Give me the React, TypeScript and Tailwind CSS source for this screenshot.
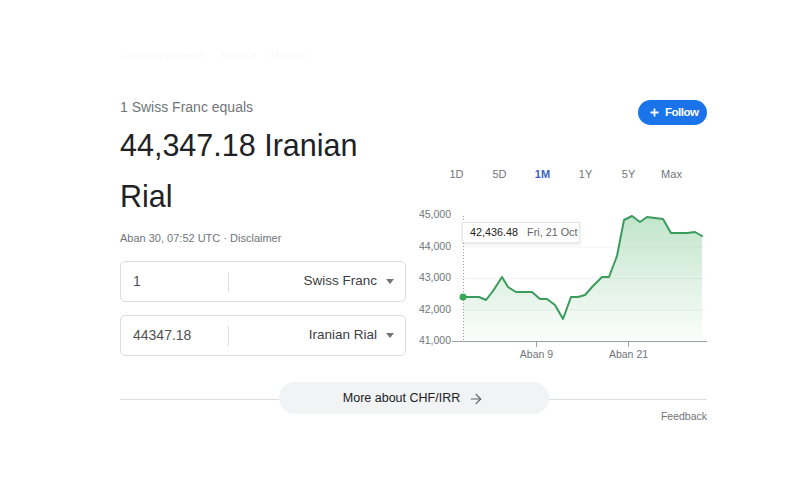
import React from "react";
import { ArrowRight } from "lucide-react";

const pts: [number, number][] = [
  [463, 297], [479, 297], [486, 300], [493, 291], [502, 277], [508, 287],
  [516, 292], [532, 292], [540, 299], [547, 299], [555, 305], [563, 319],
  [571, 297], [578, 297], [585, 295], [593, 286], [602, 277], [609, 277],
  [617, 256], [624, 220], [632, 216], [640, 222], [647, 217], [663, 219],
  [671, 233], [687, 233], [695, 232], [702, 236],
];

const linePath = pts.map((p, i) => `${i === 0 ? "M" : "L"}${p[0]},${p[1]}`).join(" ");
const fillPath = `${linePath} L702,341.5 L463,341.5 Z`;

function Converter({ amount, currency, mt }: { amount: string; currency: string; mt: string }) {
  return (
    <div className={`${mt} h-[41px] border border-[#dadce0] rounded-[5px] flex items-center`}>
      <div className="w-[107px] pl-[12px] text-[14px] text-[#4d5156]">{amount}</div>
      <div className="w-px h-[20px] bg-[#dadce0]" />
      <div className="flex-1 flex justify-end items-center pr-[11px]">
        <span className="text-[13.5px] text-[#3c4043]">{currency}</span>
        <span className="ml-[9px] w-0 h-0 border-l-[4px] border-r-[4px] border-t-[5px] border-l-transparent border-r-transparent border-t-[#70757a]" />
      </div>
    </div>
  );
}

export default function App() {
  const tabs = ["1D", "5D", "1M", "1Y", "5Y", "Max"];
  const yLabels: [string, number][] = [
    ["45,000", 215.5],
    ["44,000", 247],
    ["43,000", 278.5],
    ["42,000", 310],
    ["41,000", 341.5],
  ];
  return (
    <div
      className="w-[800px] h-[500px] bg-white overflow-hidden"
      style={{ fontFamily: '"Liberation Sans", Arial, sans-serif' }}
    >
      <div className="pt-[48px] pl-[122px] h-[64px] text-[10px] leading-[16px] text-[#f9f9f9] flex gap-[14px]">
        <span>Currency converter</span>
        <span>Finance</span>
        <span>Markets</span>
      </div>

      <div className="ml-[120px] w-[587px] mt-[33px] flex">
        {/* left */}
        <div className="w-[286px]">
          <div className="text-[14px] leading-[20px] text-[#70757a]">1 Swiss Franc equals</div>
          <div className="mt-[3px] text-[30.5px] leading-[51px] text-[#202124]">
            44,347.18 Iranian
            <br />
            Rial
          </div>
          <div className="mt-[8px] text-[11px] leading-[16px] text-[#70757a]">
            Aban 30, 07:52 UTC · Disclaimer
          </div>
          <Converter amount="1" currency="Swiss Franc" mt="mt-[15px]" />
          <Converter amount="44347.18" currency="Iranian Rial" mt="mt-[13px]" />
        </div>

        {/* right */}
        <div className="flex-1">
          <div className="mt-[3px] flex justify-end">
            <div className="h-[25px] w-[69px] rounded-full bg-[#1a73e8] text-white flex items-center pl-[12px]">
              <svg width="9" height="9" viewBox="0 0 9 9">
                <path d="M4.5 0.5V8.5M0.5 4.5H8.5" stroke="white" strokeWidth="1.8" />
              </svg>
              <span className="ml-[6px] text-[11.5px] font-bold tracking-[-0.5px]">Follow</span>
            </div>
          </div>
          <div className="mt-[41px] pl-[29px] flex h-[16px] leading-[16px] text-[11px]">
            {tabs.map((t) => (
              <div
                key={t}
                className={
                  t === "1M"
                    ? "w-[43px] text-center text-[#3b64c4] font-semibold"
                    : "w-[43px] text-center text-[#70757a]"
                }
              >
                {t}
              </div>
            ))}
          </div>
          <div className="mt-[18px] relative w-[301px] h-[165px]">
            <svg width="301" height="165" viewBox="406 200 301 165">
              <defs>
                <linearGradient id="g" x1="0" y1="216" x2="0" y2="341" gradientUnits="userSpaceOnUse">
                  <stop offset="0" stopColor="#34a853" stopOpacity="0.3" />
                  <stop offset="1" stopColor="#34a853" stopOpacity="0.02" />
                </linearGradient>
              </defs>
              {[247, 278.5, 310].map((y) => (
                <line key={y} x1="455" x2="705" y1={y} y2={y} stroke="#f3f3f3" strokeWidth="1" />
              ))}
              {yLabels.map(([l, y]) => (
                <text key={l} x="451" y={y} textAnchor="end" dominantBaseline="middle" fontSize="10.5" fill="#70757a">
                  {l}
                </text>
              ))}
              <path d={fillPath} fill="url(#g)" />
              <line x1="452" x2="707" y1="341.5" y2="341.5" stroke="#9aa0a6" strokeWidth="1" />
              <line x1="536.5" x2="536.5" y1="341.5" y2="347" stroke="#9aa0a6" strokeWidth="1" />
              <line x1="628.5" x2="628.5" y1="341.5" y2="347" stroke="#9aa0a6" strokeWidth="1" />
              <text x="536.5" y="355" textAnchor="middle" dominantBaseline="middle" fontSize="10.5" fill="#70757a">
                Aban 9
              </text>
              <text x="628.5" y="355" textAnchor="middle" dominantBaseline="middle" fontSize="10.5" fill="#70757a">
                Aban 21
              </text>
              <line x1="463.5" x2="463.5" y1="216" y2="341" stroke="#9aa0a6" strokeWidth="1" strokeDasharray="1 2" />
              <path d={linePath} fill="none" stroke="#3a9b5c" strokeWidth="2" strokeLinejoin="round" strokeLinecap="round" />
              <circle cx="463" cy="297" r="3.5" fill="#34a853" />
            </svg>
            <div className="absolute left-[56px] top-[22px] w-[118px] h-[21px] bg-white border border-[#e6e6e6] shadow-[0_1px_3px_rgba(0,0,0,0.12)] flex items-center pl-[7px] gap-[9px] text-[10.8px]">
              <span className="text-[#202124]">42,436.48</span>
              <span className="text-[#5f6368]">Fri, 21 Oct</span>
            </div>
          </div>
        </div>
      </div>

      <div className="ml-[120px] w-[587px] mt-[17px] flex items-center">
        <div className="flex-1 h-px bg-[#dadce0] mt-[2px]" />
        <div className="w-[270px] h-[32px] rounded-full bg-[#f1f3f4] flex items-center justify-center">
          <span className="text-[12.5px] text-[#202124]">More about CHF/IRR</span>
          <ArrowRight size={16} strokeWidth={1.8} className="ml-[8px] mt-[2px] text-[#5f6368]" />
        </div>
        <div className="flex-1 h-px bg-[#dadce0] mt-[2px]" />
      </div>
      <div className="ml-[120px] w-[587px] -mt-[5px] flex justify-end text-[10.5px] leading-[14px] text-[#70757a]">
        Feedback
      </div>
    </div>
  );
}
